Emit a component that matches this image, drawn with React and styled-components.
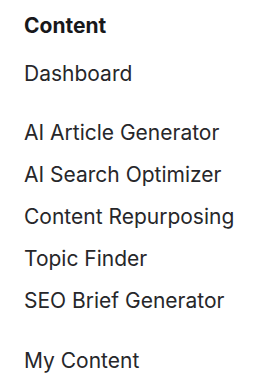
import React from "react";
import styled, { createGlobalStyle } from "styled-components";

const Global = createGlobalStyle`
  html, body { margin: 0; padding: 0; background: #ffffff; }
  body { font-family: Inter, "Noto Sans", sans-serif; -webkit-font-smoothing: antialiased; }
`;

const Nav = styled.nav`
  display: flex;
  flex-direction: column;
  padding: 14px 24px;
  color: #1f1f23;
`;

const Heading = styled.h2`
  margin: 0;
  font-size: 21px;
  font-weight: 700;
  line-height: 24px;
  color: #18181b;
`;

const Group = styled.ul`
  list-style: none;
  margin: ${(p) => p.$top}px 0 0;
  padding: 0;
  display: flex;
  flex-direction: column;
`;

const Item = styled.li`
  font-size: 21px;
  line-height: 42px;
  font-weight: 400;
  color: #27272a;
  white-space: nowrap;
`;

export default function App() {
  const groups = [
    { top: 15, items: ["Dashboard"] },
    { top: 17, items: ["AI Article Generator", "AI Search Optimizer", "Content Repurposing", "Topic Finder", "SEO Brief Generator"] },
    { top: 18, items: ["My Content"] },
  ];
  return (
    <>
      <Global />
      <Nav>
        <Heading>Content</Heading>
        {groups.map((g, i) => (
          <Group key={i} $top={g.top}>
            {g.items.map((t) => (
              <Item key={t}>{t}</Item>
            ))}
          </Group>
        ))}
      </Nav>
    </>
  );
}
